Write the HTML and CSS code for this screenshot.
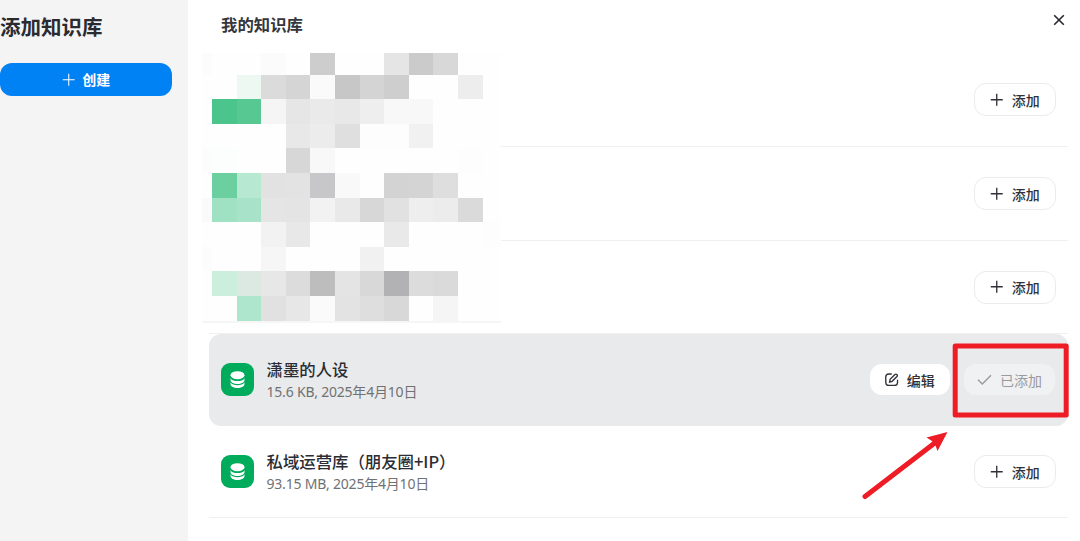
FILE: index.html
```html
<!DOCTYPE html>
<html lang="zh-CN">
<head>
<meta charset="utf-8">
<title>添加知识库</title>
<link rel="stylesheet" href="styles.css">
</head>
<body>
<svg class="defs" width="0" height="0">
  <symbol id="plus" viewBox="0 0 14 14"><path d="M7 .8v12.400M.8 7h12.400"/></symbol>
  <symbol id="db" viewBox="0 0 33 33">
    <ellipse cx="16.500" cy="12.200" rx="7" ry="4"/>
    <path d="M9.500 15.200c1.200 2.200 4 2.900 7 2.900s5.800-.7 7-2.900v1.700c0 2.400-3.200 4-7 4s-7-1.600-7-4z"/>
    <path d="M9.500 19.300c1.200 2.200 4 2.900 7 2.900s5.800-.7 7-2.900v1.700c0 2.400-3.200 4-7 4s-7-1.600-7-4z"/>
  </symbol>
</svg>
<div class="dialog">
  <aside class="sidebar">
    <h1 class="title">添加知识库</h1>
    <button class="create"><svg class="icon thin"><use href="#plus"/></svg><span class="label">创建</span></button>
  </aside>
  <main class="main">
    <header class="head">
      <h2 class="subtitle">我的知识库</h2>
      <svg class="close" viewBox="0 0 12 12"><path d="M1.200 1.200l9.600 9.600M10.800 1.200l-9.600 9.600"/></svg>
    </header>
    <div class="list">
      <div class="row"><button class="btn"><svg class="icon"><use href="#plus"/></svg>添加</button></div>
      <div class="row"><button class="btn"><svg class="icon"><use href="#plus"/></svg>添加</button></div>
      <div class="row short"><button class="btn"><svg class="icon"><use href="#plus"/></svg>添加</button></div>
      <div class="row selected">
        <svg class="avatar"><use href="#db"/></svg>
        <div class="info"><div class="name">潇墨的人设</div><div class="meta">15.6 KB, 2025年4月10日</div></div>
        <button class="btn edit"><svg class="icon" viewBox="0 0 14 14"><path d="M7 1H4Q.8 1 .8 4.200v5.600Q.8 13 4 13h5.800q3.200 0 3.200-3.200V7"/><path d="M4.800 9.300l.5-2.700 5-5q1-.9 2 0t.1 2l-5 5z"/></svg>编辑</button>
        <button class="btn added"><svg class="icon check" viewBox="0 0 15 12"><path d="M1 5.800l4.300 4.300L14 1.200"/></svg>已添加</button>
      </div>
      <div class="row last">
        <svg class="avatar"><use href="#db"/></svg>
        <div class="info"><div class="name">私域运营库（朋友圈+IP）</div><div class="meta">93.15 MB, 2025年4月10日</div></div>
        <button class="btn"><svg class="icon"><use href="#plus"/></svg>添加</button>
      </div>
    </div>
  </main>
</div>

<!-- Pixelated cover over the private entries; one unit is one mosaic cell -->
<svg class="mosaic" viewBox="0 0 299 270" shape-rendering="crispEdges">
  <rect width="299" height="270" fill="#fefefe"/>
  <rect y="267.500" width="299" height="2" fill="#f6f6f6"/>
  <g transform="translate(10 21.500) scale(24.600)">
    <g transform="translate(0 -.86) scale(1 .86)">
      <rect x="-.4" width=".4" height="1" fill="#fcfcfc"/><rect x="2" width="1" height="1" fill="#fbfbfb"/><rect x="4" width="1" height="1" fill="#cdcdcd"/><rect x="7" width="1" height="1" fill="#e5e5e5"/><rect x="8" width="1" height="1" fill="#cbcbcb"/><rect x="9" width="1" height="1" fill="#d8d8d8"/>
    </g>
    <g>
      <rect x="1" width="1" height="1" fill="#eef8f3"/><rect x="2" width="1" height="1" fill="#dbdbdb"/><rect x="3" width="1" height="1" fill="#d5d5d5"/><rect x="4" width="1" height="1" fill="#fafafa"/><rect x="5" width="1" height="1" fill="#c7c7c7"/><rect x="6" width="1" height="1" fill="#d4d4d4"/><rect x="7" width="1" height="1" fill="#cecece"/><rect x="10" width="1" height="1" fill="#ededed"/>
    </g>
    <g transform="translate(0 1)">
      <rect width="1" height="1" fill="#4bc58b"/><rect x="1" width="1" height="1" fill="#58c892"/><rect x="2" width="1" height="1" fill="#f5f5f5"/><rect x="3" width="1" height="1" fill="#e6e6e6"/><rect x="4" width="1" height="1" fill="#eaeaea"/><rect x="5" width="1" height="1" fill="#e8e8e8"/><rect x="6" width="1" height="1" fill="#eeeeee"/><rect x="7" width="2" height="1" fill="#f8f8f8"/>
    </g>
    <g transform="translate(0 2)">
      <rect x="3" width="1" height="1" fill="#e8e8e8"/><rect x="4" width="1" height="1" fill="#ececec"/><rect x="5" width="1" height="1" fill="#dfdfdf"/><rect x="6" width="2" height="1" fill="#fdfdfd"/><rect x="8" width="1" height="1" fill="#f1f1f1"/>
    </g>
    <g transform="translate(0 3)">
      <rect x="-.4" width=".4" height="1" fill="#fcfcfc"/><rect width="1" height="1" fill="#fbfefd"/><rect x="3" width="1" height="1" fill="#d7d7d7"/><rect x="4" width="1" height="1" fill="#f8f8f8"/><rect x="10" width="1" height="1" fill="#fdfdfd"/>
    </g>
    <g transform="translate(0 4)">
      <rect width="1" height="1" fill="#6bcf9f"/><rect x="1" width="1" height="1" fill="#b7e9d2"/><rect x="2" width="1" height="1" fill="#e2e2e2"/><rect x="3" width="1" height="1" fill="#e3e3e3"/><rect x="4" width="1" height="1" fill="#c7c7c9"/><rect x="5" width="1" height="1" fill="#f9f9f9"/><rect x="7" width="1" height="1" fill="#d3d3d3"/><rect x="8" width="1" height="1" fill="#d4d4d4"/><rect x="9" width="1" height="1" fill="#dedede"/>
    </g>
    <g transform="translate(0 5)">
      <rect x="-.4" width=".4" height="1" fill="#fafafa"/><rect width="1" height="1" fill="#a0e1c3"/><rect x="1" width="1" height="1" fill="#a8e2c8"/><rect x="2" width="1" height="1" fill="#e5e5e5"/><rect x="3" width="1" height="1" fill="#e4e4e4"/><rect x="4" width="1" height="1" fill="#f2f2f2"/><rect x="5" width="1" height="1" fill="#e9e9e9"/><rect x="6" width="1" height="1" fill="#d7d7d7"/><rect x="7" width="1" height="1" fill="#e1e1e1"/><rect x="8" width="1" height="1" fill="#eeeeee"/><rect x="9" width="1" height="1" fill="#ececec"/><rect x="10" width="1" height="1" fill="#dadada"/>
    </g>
    <g transform="translate(0 6)">
      <rect x="2" width="1" height="1" fill="#f2f2f2"/><rect x="3" width="1" height="1" fill="#e8e8e8"/><rect x="7" width="1" height="1" fill="#e9e9e9"/><rect x="11" width=".7" height="1" fill="#fdfdfd"/>
    </g>
    <g transform="translate(0 7)">
      <rect x="-.4" width=".4" height="1" fill="#fcfcfc"/><rect x="2" width="1" height="1" fill="#f6f6f6"/><rect x="6" width="1" height="1" fill="#f1f1f1"/>
    </g>
    <g transform="translate(0 8)">
      <rect width="1" height="1" fill="#cbeedd"/><rect x="1" width="1" height="1" fill="#dce9e2"/><rect x="2" width="1" height="1" fill="#e7e7e7"/><rect x="3" width="1" height="1" fill="#dcdcdc"/><rect x="4" width="1" height="1" fill="#bdbdbd"/><rect x="5" width="1" height="1" fill="#e4e4e4"/><rect x="6" width="1" height="1" fill="#d8d8d8"/><rect x="7" width="1" height="1" fill="#b2b2b4"/><rect x="8" width="1" height="1" fill="#dcdcdc"/><rect x="9" width="1" height="1" fill="#dadada"/>
    </g>
    <g transform="translate(0 9)">
      <rect x="1" width="1" height="1" fill="#aee6cd"/><rect x="2" width="1" height="1" fill="#e1e1e1"/><rect x="3" width="1" height="1" fill="#e7e7e7"/><rect x="4" width="1" height="1" fill="#fafafa"/><rect x="5" width="1" height="1" fill="#e3e3e3"/><rect x="6" width="1" height="1" fill="#dedede"/><rect x="7" width="1" height="1" fill="#d8d8d8"/><rect x="9" width="1" height="1" fill="#f5f5f5"/>
    </g>
  </g>
</svg>

<!-- Red callout box and arrow -->
<svg class="callout" viewBox="0 0 220 165">
  <rect x="95.200" y="6" width="111" height="69" fill="none" stroke="#ee1c25" stroke-width="5" stroke-linejoin="round"/>
  <path d="M5 156.500L76 102" fill="none" stroke="#ee1c25" stroke-width="5" stroke-linecap="round"/>
  <path d="M87.500 92L66.500 97.500L72 101L75.500 105.500L77.500 111Z" fill="#ee1c25"/>
</svg>
</body>
</html>
```

FILE: styles.css
```css
* { box-sizing: border-box; }
body {
  margin: 0;
  background: #fff;
  color: #2b2d33;
  font-family: "Noto Sans", "Noto Sans CJK SC", sans-serif;
}
h1, h2 { margin: 0; }
button { font-family: "Noto Sans CJK SC", sans-serif; }
.defs { position: absolute; }
.dialog { display: flex; width: 1080px; height: 541px; overflow: hidden; }

.sidebar { width: 188px; flex: none; background: #f4f4f4; padding-top: 11px; }
.title { font: 700 20.500px/30px "Noto Sans CJK SC", sans-serif; color: #292b31; }
.create {
  display: flex; align-items: center; justify-content: center; gap: 7px;
  width: 172px; height: 33px; margin-top: 22px; padding: 0;
  border: 0; border-radius: 12px;
  background: #0082f5; color: #fff; font-size: 14px; font-weight: 700;
}
.create .label { padding-bottom: 2px; }

.main { flex: 1; padding: 0 12px 0 21px; }
.head { display: flex; justify-content: space-between; height: 53px; padding: 13px 3px 0 12px; }
.subtitle { font: 700 16.400px/22px "Noto Sans CJK SC", sans-serif; color: #34363c; }
.close { width: 12px; height: 12px; margin-top: 1px; stroke: #26282d; stroke-width: 1.600; fill: none; }

.row {
  display: flex; align-items: center; height: 94px; padding: 0 12px;
  border-bottom: 1px solid #f0f0f0;
}
.row.short { height: 93px; }
.row.selected { height: 92px; background: #e9eaec; border: 0; border-radius: 12px; padding: 0 13px 1px 12px; }
.row.last { height: 92px; }
.avatar { width: 33px; height: 33px; border-radius: 9px; background: #00ab5b; fill: #fff; flex: none; }
.info { margin-left: 12.500px; }
.last .info { padding-top: 1px; }
.name { font: 500 16.400px/22px "Noto Sans CJK SC", sans-serif; white-space: nowrap; }
.meta { font-size: 14px; line-height: 20px; color: #707173; margin-top: 2px; letter-spacing: -.2px; }

.btn {
  display: flex; align-items: center; justify-content: center; gap: 8px;
  width: 82px; height: 33px; margin-left: auto; padding: 0;
  border: 1px solid #ebebeb; border-radius: 12px;
  background: #fff; color: #303238; font-size: 14px; font-weight: 500;
}
.btn.edit { width: 80px; height: 31px; border: 0; }
.btn.added {
  width: 91px; height: 31px; margin-left: 14px; border: 0;
  background: #f0f1f2; color: #999a9c; font-weight: 400;
}
.icon { width: 13.500px; height: 13.500px; fill: none; stroke: currentColor; stroke-width: 1.400; }
.icon.thin { stroke-width: 1.100; }
.icon.check { width: 15px; height: 12px; }

.mosaic { position: absolute; left: 202px; top: 52.700px; width: 299px; height: 270px; }
.callout { position: absolute; left: 860px; top: 340px; width: 220px; height: 165px; }
```
